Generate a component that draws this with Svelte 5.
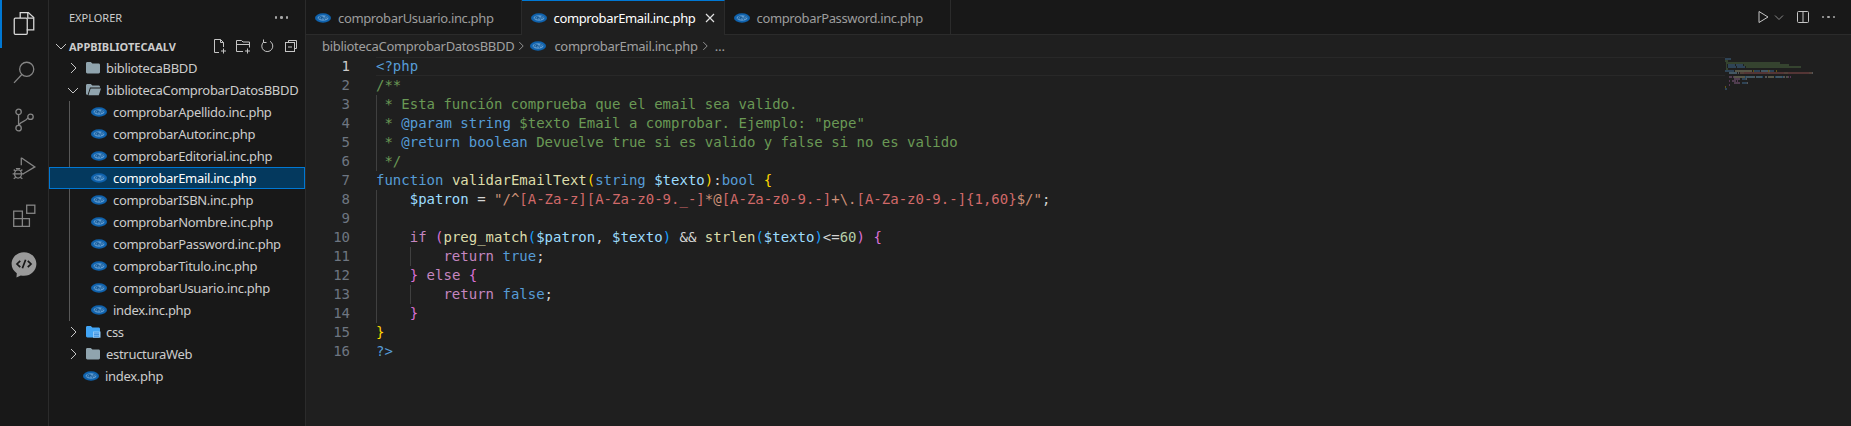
<script lang="ts">
  type Tok = [string, string]

  const folderFiles = [
    'comprobarApellido.inc.php',
    'comprobarAutor.inc.php',
    'comprobarEditorial.inc.php',
    'comprobarEmail.inc.php',
    'comprobarISBN.inc.php',
    'comprobarNombre.inc.php',
    'comprobarPassword.inc.php',
    'comprobarTitulo.inc.php',
    'comprobarUsuario.inc.php',
    'index.inc.php'
  ]

  const tabs = [
    { name: 'comprobarUsuario.inc.php', active: false },
    { name: 'comprobarEmail.inc.php', active: true },
    { name: 'comprobarPassword.inc.php', active: false }
  ]

  const code: Tok[][] = [
    [['tag', '<?php']],
    [['com', '/**']],
    [['com', ' * Esta función comprueba que el email sea valido.']],
    [['com', ' * '], ['kw', '@param'], ['com', ' '], ['kw', 'string'], ['com', ' $texto Email a comprobar. Ejemplo: "pepe"']],
    [['com', ' * '], ['kw', '@return'], ['com', ' '], ['kw', 'boolean'], ['com', ' Devuelve true si es valido y false si no es valido']],
    [['com', ' */']],
    [['kw', 'function'], ['pl', ' '], ['fn', 'validarEmailText'], ['b1', '('], ['kw', 'string'], ['pl', ' '], ['var', '$texto'], ['b1', ')'], ['pl', ':'], ['kw', 'bool'], ['pl', ' '], ['b1', '{']],
    [['pl', '    '], ['var', '$patron'], ['pl', ' = '], ['str', '"/^'], ['re', '[A-Za-z][A-Za-z0-9._-]'], ['str', '*@'], ['re', '[A-Za-z0-9.-]'], ['str', '+\\.'], ['re', '[A-Za-z0-9.-]{1,60}'], ['str', '$/"'], ['pl', ';']],
    [],
    [['pl', '    '], ['ctl', 'if'], ['pl', ' '], ['b2', '('], ['fn', 'preg_match'], ['b3', '('], ['var', '$patron'], ['pl', ', '], ['var', '$texto'], ['b3', ')'], ['pl', ' && '], ['fn', 'strlen'], ['b3', '('], ['var', '$texto'], ['b3', ')'], ['pl', '<='], ['num', '60'], ['b2', ')'], ['pl', ' '], ['b2', '{']],
    [['pl', '        '], ['ctl', 'return'], ['pl', ' '], ['kw', 'true'], ['pl', ';']],
    [['pl', '    '], ['b2', '}'], ['pl', ' '], ['ctl', 'else'], ['pl', ' '], ['b2', '{']],
    [['pl', '        '], ['ctl', 'return'], ['pl', ' '], ['kw', 'false'], ['pl', ';']],
    [['pl', '    '], ['b2', '}']],
    [['b1', '}']],
    [['tag', '?>']]
  ]

  // minimap bars per line: [start char, length, token class]
  const mini: [number, number, string][][] = code.map((line) => {
    let x = 0
    const out: [number, number, string][] = []
    for (const [cls, text] of line) {
      const lead = text.length - text.trimStart().length
      const len = text.trim().length
      if (len) out.push([x + lead, len, cls])
      x += text.length
    }
    return out
  })

  const miniColors: Record<string, string> = {
    tag: '#569cd6', com: '#6a9955', kw: '#569cd6', pl: '#d4d4d4', fn: '#dcdcaa',
    b1: '#ffd700', b2: '#da70d6', b3: '#179fff', var: '#9cdcfe', str: '#ce9178', re: '#d16969',
    ctl: '#c586c0', num: '#b5cea8'
  }
</script>

{#snippet php()}
  <svg class="php" viewBox="0 0 17 10" width="16" height="10" aria-hidden="true">
    <ellipse cx="8.5" cy="5" rx="8.5" ry="5" fill="#0f62ad" />
    <ellipse cx="8.5" cy="5" rx="5.8" ry="3" fill="#5f9bd0" />
    <path d="M4 6.6 5 3.6h1.6c.8 0 .8 1.6-.6 1.7H5.2M7.6 3l-.9 3.6M7.3 4.6h1.600l-.5 2M10 6.900l1-3.300h1.600c.8 0 .8 1.600-.6 1.700h-.8" fill="none" stroke="#0b4f8c" stroke-width=".8" />
  </svg>
{/snippet}

{#snippet chevron(open: boolean)}
  <svg class="chev" viewBox="0 0 16 16" width="16" height="16" aria-hidden="true">
    {#if open}
      <path d="M3 6l5 5 5-5" fill="none" stroke="#c5c5c5" stroke-width="1" />
    {:else}
      <path d="M6 3l5 5-5 5" fill="none" stroke="#c5c5c5" stroke-width="1" />
    {/if}
  </svg>
{/snippet}

{#snippet folder(open: boolean)}
  <svg class="fold" viewBox="0 0 16 14" width="16" height="14" aria-hidden="true">
    {#if open}
      <path d="M1 2.500C1 1.700 1.600 1 2.400 1h3.400l1.600 1.600h6.200c.8 0 1.400.6 1.400 1.400v.6H5L2.600 12H2.400C1.600 12 1 11.400 1 10.600z" fill="#90a4ae" />
      <path d="M5.600 5.600H16l-2.200 6.600H3.400z" fill="#90a4ae" />
    {:else}
      <path d="M1 2.400C1 1.600 1.600 1 2.400 1h3.400l1.600 1.600h6.200c.8 0 1.400.6 1.400 1.400v7c0 .8-.6 1.400-1.400 1.400H2.400C1.600 12.400 1 11.800 1 11z" fill="#90a4ae" />
    {/if}
  </svg>
{/snippet}

<div class="app">
  <nav class="activity">
    <div class="act active">
      <svg viewBox="0 0 24 24" width="26" height="26" fill="none" stroke="#d7d7d7" stroke-width="1.200"><path d="M8.500 6.500V1.500h7.500l5 4.500v11.500h-6.500" /><path d="M15.500 1.500V6.500h5.500" /><rect x="3" y="6.500" width="12" height="15" rx="1" /></svg>
    </div>
    <div class="act">
      <svg viewBox="0 0 24 24" width="26" height="26" fill="none" stroke="#858585" stroke-width="1.200"><circle cx="14.500" cy="9.500" r="6.500" /><path d="M10 14.300 2.800 22" /></svg>
    </div>
    <div class="act">
      <svg viewBox="0 0 24 24" width="26" height="26" fill="none" stroke="#858585" stroke-width="1.200"><circle cx="7" cy="4.500" r="2.500" /><circle cx="7" cy="19.500" r="2.500" /><circle cx="18" cy="9" r="2.500" /><path d="M7 7v10M15.600 10C14 13.500 9 13 7.500 16.500" /></svg>
    </div>
    <div class="act">
      <svg viewBox="0 0 24 24" width="26" height="26" fill="none" stroke="#858585" stroke-width="1.200"><path d="M9.500 2.500 22 11 11 17.500M9.500 2.500v7" /><ellipse cx="6.500" cy="17.500" rx="3.200" ry="3.800" /><path d="M1.500 17.500h10M2.500 13.500l2 1.500M10.500 13.500l-2 1.500M2.500 22l2-1.500M10.500 22l-2-1.500M4.500 12.500h4" /></svg>
    </div>
    <div class="act">
      <svg viewBox="0 0 24 24" width="26" height="26" fill="none" stroke="#858585" stroke-width="1.200"><path d="M2.500 7.500h8v14h-8zM2.500 14.500h14.500v7h-6.500M10.500 14.500h6.500V21.500" /><rect x="14.500" y="2" width="7.500" height="7.500" /></svg>
    </div>
    <div class="act">
      <svg viewBox="0 0 26 26" width="28" height="28"><path d="M13 2c6.500 0 11.500 5 11.500 11S19.500 24 13 24c-1 0-2-.1-3-.4L6 25.500l.3-4C3.300 19.500 1.500 16.500 1.500 13 1.500 7 6.500 2 13 2z" fill="#9a9a9a" /><path d="M9.500 10 6.500 13l3 3M16.500 10l3 3-3 3M14.500 9l-3 8" fill="none" stroke="#181818" stroke-width="1.600" /></svg>
    </div>
  </nav>

  <aside class="sidebar">
    <header class="side-head">
      <span>EXPLORER</span>
      <span class="dots"><i></i><i></i><i></i></span>
    </header>
    <div class="root">
      {@render chevron(true)}
      <strong>APPBIBLIOTECAALV</strong>
      <span class="root-tools">
        <svg viewBox="0 0 16 16" width="16" height="16" fill="none" stroke="#c5c5c5"><path d="M8 14.500H3.500v-13h6l3 3V9M9.500 1.500v3h3M12.500 10.500v5M10 13h5" /></svg>
        <svg viewBox="0 0 16 16" width="16" height="16" fill="none" stroke="#c5c5c5"><path d="M8 13.500H1.500v-11h5l1.500 1.500h6.500v5.500M1.500 6.500h13M12.500 10.500v5M10 13h5" /></svg>
        <svg viewBox="0 0 16 16" width="16" height="16" fill="none" stroke="#c5c5c5"><path d="M4.600 4A5.500 5.500 0 1 0 11 3.300" /><path d="M4.500 1.500V4.500h3" /></svg>
        <svg viewBox="0 0 16 16" width="16" height="16" fill="none" stroke="#c5c5c5"><path d="M5.500 4.500v-2h8v8h-2" /><rect x="2.500" y="4.500" width="9" height="9" /><path d="M5 9h4" /></svg>
      </span>
    </div>

    <div class="row lvl1">{@render chevron(false)}{@render folder(false)}<span>bibliotecaBBDD</span></div>
    <div class="row lvl1">{@render chevron(true)}{@render folder(true)}<span>bibliotecaComprobarDatosBBDD</span></div>
    <div class="nested">
      {#each folderFiles as f}
        <div class="row file" class:selected={f === 'comprobarEmail.inc.php'}>{@render php()}<span>{f}</span></div>
      {/each}
    </div>
    <div class="row lvl1">
      {@render chevron(false)}
      <svg class="fold" viewBox="0 0 16 14" width="16" height="14" aria-hidden="true">
        <path d="M1 2.400C1 1.600 1.600 1 2.400 1h3.400l1.600 1.600h6.200c.8 0 1.400.6 1.400 1.400v7c0 .8-.6 1.400-1.400 1.400H2.400C1.600 12.400 1 11.800 1 11z" fill="#42a5f5" />
        <path d="M8 6.500h7.500v6.200H8z" fill="#90caf9" />
        <path d="M9 8h5M9 9.600h5M9 11.200h5" stroke="#1976d2" stroke-width=".7" />
      </svg>
      <span>css</span>
    </div>
    <div class="row lvl1">{@render chevron(false)}{@render folder(false)}<span>estructuraWeb</span></div>
    <div class="row top-file">{@render php()}<span>index.php</span></div>
  </aside>

  <main class="editor">
    <div class="tabbar">
      {#each tabs as t}
        <div class="tab" class:active={t.active}>
          {@render php()}
          <span>{t.name}</span>
          {#if t.active}
            <svg class="close" viewBox="0 0 16 16" width="16" height="16"><path d="M4 4l8 8M12 4l-8 8" stroke="#e0e0e0" stroke-width="1.200" /></svg>
          {/if}
        </div>
      {/each}
      <div class="tab-tools">
        <svg viewBox="0 0 16 16" width="16" height="16" fill="none" stroke="#c5c5c5"><path d="M4 2.500v11l9-5.500z" /></svg>
        <svg class="caret" viewBox="0 0 10 16" width="10" height="16" fill="none" stroke="#8a8a8a"><path d="M1 6.500l4 4 4-4" /></svg>
        <svg class="split" viewBox="0 0 16 16" width="16" height="16" fill="none" stroke="#c5c5c5"><rect x="2.500" y="2.500" width="11" height="11" rx="1" /><path d="M8 2.500v11" /></svg>
        <span class="dots"><i></i><i></i><i></i></span>
      </div>
    </div>

    <div class="crumbs">
      <span>bibliotecaComprobarDatosBBDD</span>
      <svg viewBox="0 0 16 16" width="14" height="14" fill="none" stroke="#a0a0a0"><path d="M6 3.500l4.500 4.500-4.500 4.500" /></svg>
      {@render php()}
      <span>comprobarEmail.inc.php</span>
      <svg viewBox="0 0 16 16" width="14" height="14" fill="none" stroke="#a0a0a0"><path d="M6 3.500l4.500 4.500-4.500 4.500" /></svg>
      <span class="more">…</span>
    </div>

    <div class="code-area">
      <div class="gutter">
        {#each code as _, i}
          <div class="ln" class:cur={i === 0}>{i + 1}</div>
        {/each}
      </div>
      <div class="lines">
        {#each code as line, i}
          <div class="line" class:cur={i === 0} class:guide={(i >= 2 && i <= 5) || (i >= 7 && i <= 13)} class:guide-in={i === 10 || i === 12}>
            {#each line as [cls, text]}<span class={cls}>{text}</span>{/each}
          </div>
        {/each}
      </div>
      <div class="minimap">
        {#each mini as row}
          <div class="mini-row">
            {#each row as [x, len, cls]}
              <i style="left:{x * 1.1}px;width:{len * 1.1}px;background:{miniColors[cls]}"></i>
            {/each}
          </div>
        {/each}
      </div>
    </div>
  </main>
</div>

<style>
  :global(body) {
    margin: 0;
    background: #1f1f1f;
  }

  .app {
    display: flex;
    width: 1851px;
    height: 426px;
    overflow: hidden;
    font-family: "Noto Sans", sans-serif;
    font-size: 13px;
    letter-spacing: -0.3px;
    color: #cccccc;
    background: #1f1f1f;
  }

  .activity {
    width: 48px;
    flex: none;
    background: #181818;
    border-right: 1px solid #2b2b2b;
  }

  .act {
    height: 48px;
    display: flex;
    align-items: center;
    justify-content: center;
    box-sizing: border-box;
    border-left: 2px solid transparent;
    padding-right: 2px;
  }

  .act.active {
    border-left-color: #0078d4;
  }

  .sidebar {
    width: 256px;
    flex: none;
    background: #181818;
    border-right: 1px solid #2b2b2b;
  }

  .side-head {
    height: 35px;
    display: flex;
    align-items: center;
    justify-content: space-between;
    padding: 0 17px 0 20px;
    font-size: 11px;
    letter-spacing: 0;
  }

  .dots {
    display: inline-flex;
    gap: 3px;
  }

  .dots i {
    width: 2.500px;
    height: 2.500px;
    border-radius: 50%;
    background: #a8a8a8;
  }

  .root {
    height: 22px;
    display: flex;
    align-items: center;
    padding-left: 4px;
    font-size: 11px;
    letter-spacing: 0;
  }

  .root strong {
    font-weight: 700;
  }

  .root-tools {
    margin-left: auto;
    display: flex;
    gap: 8px;
    padding-right: 6px;
  }

  .row {
    height: 22px;
    display: flex;
    align-items: center;
    box-sizing: border-box;
    white-space: nowrap;
  }

  .lvl1 {
    padding-left: 16px;
  }

  .fold {
    margin: 0 5px 0 4px;
  }

  .nested {
    border-left: 1px solid #585858;
    margin-left: 20px;
  }

  .file {
    margin-left: -21px;
    padding-left: 41px;
    border: 1px solid transparent;
  }

  .selected {
    background: #04395e;
    border-color: #0078d4;
    color: #ffffff;
  }

  .php {
    flex: none;
    margin-right: 6px;
  }

  .top-file {
    padding-left: 34px;
  }

  .editor {
    flex: 1;
    min-width: 0;
    display: flex;
    flex-direction: column;
  }

  .tabbar {
    height: 35px;
    flex: none;
    display: flex;
    background: #181818;
    border-bottom: 1px solid #2b2b2b;
    box-sizing: border-box;
  }

  .tab {
    display: flex;
    align-items: center;
    height: 35px;
    padding: 0 27px 0 9px;
    box-sizing: border-box;
    border-right: 1px solid #2b2b2b;
    color: #9d9d9d;
    white-space: nowrap;
    letter-spacing: -0.36px;
  }

  .tab .php {
    margin-right: 7px;
  }

  .tab.active {
    background: #1f1f1f;
    color: #ffffff;
    border-top: 1px solid #0078d4;
    padding-right: 6px;
  }

  .close {
    margin-left: 6px;
  }

  .tab-tools {
    margin-left: auto;
    display: flex;
    align-items: center;
    padding-right: 16px;
  }

  .caret {
    margin-left: 3px;
  }

  .split {
    margin: 0 11px;
  }

  .crumbs {
    height: 22px;
    flex: none;
    display: flex;
    align-items: center;
    padding-left: 16px;
    color: #a0a0a0;
  }

  .crumbs .php {
    margin: 0 8px 0 2px;
  }

  .more {
    margin-left: 3px;
  }

  .code-area {
    flex: 1;
    display: flex;
    min-height: 0;
    font-family: "DejaVu Sans Mono", monospace;
    font-size: 14px;
    line-height: 19px;
    letter-spacing: 0;
  }

  .gutter {
    width: 70px;
    flex: none;
  }

  .ln {
    height: 19px;
    text-align: right;
    padding-right: 26px;
    color: #6e7681;
  }

  .ln.cur {
    color: #cccccc;
  }

  .lines {
    flex: 1;
    min-width: 0;
  }

  .line {
    height: 19px;
    white-space: pre;
    box-sizing: border-box;
  }

  .line.cur {
    box-shadow: inset 0 1px 0 #282828, inset 0 -1px 0 #282828;
  }

  .guide {
    background: linear-gradient(#404040, #404040) 0 0 / 1px 100% no-repeat;
  }

  .guide-in {
    background: linear-gradient(#404040, #404040) 0 0 / 1px 100% no-repeat, linear-gradient(#404040, #404040) 34px 0 / 1px 100% no-repeat;
  }

  .minimap {
    width: 126px;
    flex: none;
    padding-top: 1px;
  }

  .mini-row {
    height: 2px;
    position: relative;
  }

  .mini-row i {
    position: absolute;
    top: 0;
    height: 2px;
    opacity: 0.3;
  }

  .tag { color: #569cd6; }
  .com { color: #6a9955; }
  .kw { color: #569cd6; }
  .pl { color: #d4d4d4; }
  .fn { color: #dcdcaa; }
  .b1 { color: #ffd700; }
  .b2 { color: #da70d6; }
  .b3 { color: #179fff; }
  .var { color: #9cdcfe; }
  .str { color: #ce9178; }
  .re { color: #d16969; }
  .ctl { color: #c586c0; }
  .num { color: #b5cea8; }
</style>
